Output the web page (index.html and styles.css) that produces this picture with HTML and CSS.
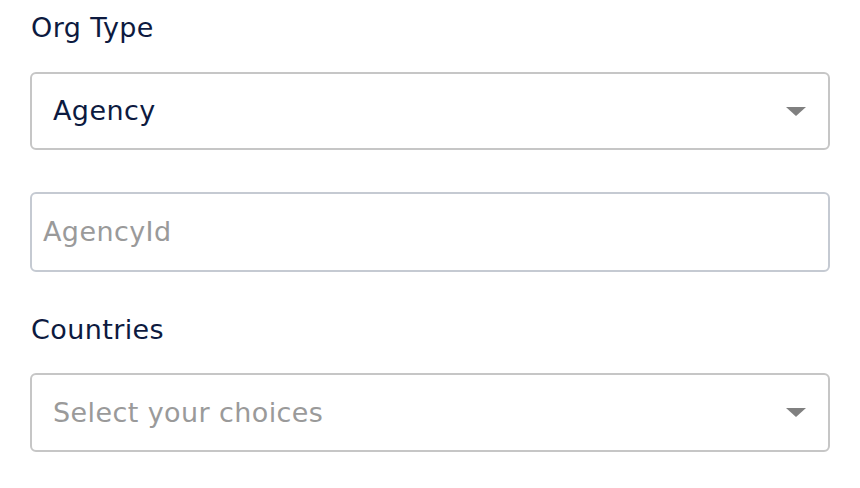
FILE: index.html
```html
<!DOCTYPE html>
<html>
<head>
<meta charset="utf-8">
<link rel="stylesheet" href="styles.css">
</head>
<body>
<form class="form">
  <div class="label lbl-org">Org Type</div>
  <div class="select sel-org">
    <span class="value">Agency</span>
    <span class="caret"></span>
  </div>
  <div class="input">
    <span class="placeholder">AgencyId</span>
  </div>
  <div class="label lbl-countries">Countries</div>
  <div class="select sel-countries">
    <span class="placeholder">Select your choices</span>
    <span class="caret"></span>
  </div>
</form>
</body>
</html>
```
FILE: styles.css
```css
html, body {
  margin: 0;
  padding: 0;
  background: #ffffff;
}
.form {
  width: 800px;
  padding: 10px 30px 0 30px;
  display: flex;
  flex-direction: column;
  font-family: "DejaVu Sans", sans-serif;
  font-size: 27px;
  letter-spacing: 0.4px;
  line-height: 36px;
}
.label {
  color: #0d1a3f;
  padding-left: 1px;
}
.lbl-org { margin-bottom: 26px; }
.lbl-countries { margin-top: 40px; margin-bottom: 25px; }
.select, .input {
  box-sizing: border-box;
  border: 2px solid #c6c6c6;
  border-radius: 6px;
  display: flex;
  align-items: center;
}
.select {
  padding: 0 22px 0 21px;
  justify-content: space-between;
}
.sel-org { height: 78px; }
.sel-countries { height: 79px; }
.input {
  height: 80px;
  margin-top: 42px;
  padding-left: 11px;
  border-color: #c5cad2;
}
.value { color: #0d1a3f; }
.placeholder { color: #9a9a9a; }
.caret {
  width: 0;
  height: 0;
  border-left: 10px solid transparent;
  border-right: 10px solid transparent;
  border-top: 9px solid #808080;
}
```
